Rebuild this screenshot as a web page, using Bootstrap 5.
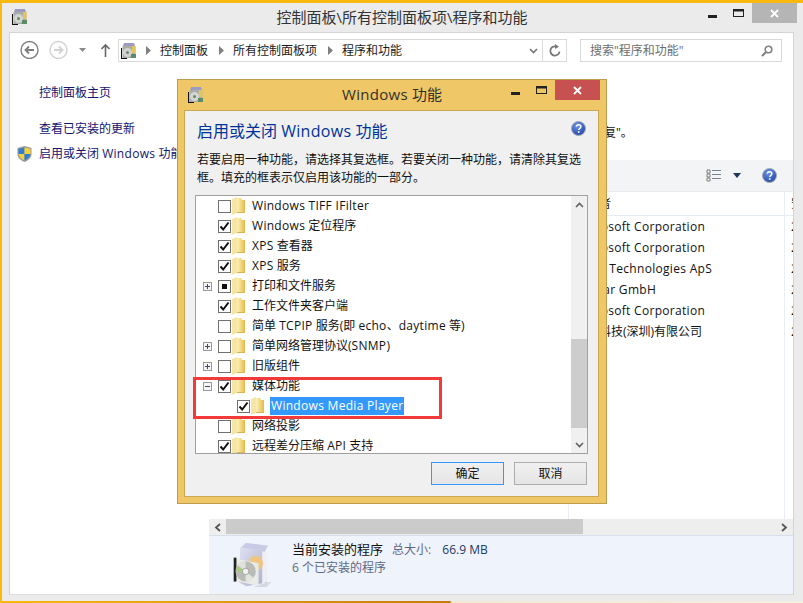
<!DOCTYPE html>
<html lang="zh-CN">
  <head>
    <meta charset="UTF-8" />
    <title>程序和功能</title>
    <link href="https://cdn.jsdelivr.net/npm/bootstrap@5.3.0/dist/css/bootstrap.min.css" rel="stylesheet" />
    <style>
      html, body { width: 803px; height: 603px; overflow: hidden; }
      body {
        background: #ebebeb;
        font-family: "Open Sans", "Noto Sans CJK SC", sans-serif;
        font-size: 12px;
        line-height: 16px;
        color: #1a1a1a;
      }
      .lat { letter-spacing: .3px; }
      .win-main {
        width: 803px; height: 603px; position: relative;
        border-top: 3px solid #fbb80f; border-left: 2px solid #fbb80f;
      }
      .win-title { height: 29px; padding-left: 10px; }
      .win-icon { margin-top: 6px; }
      .win-title-text { flex: 1; text-align: center; font-size: 15px; color: #333; padding-left: 120px; padding-top: 6px; }
      .win-btns { width: 141px; height: 20px; margin-right: 6px; }
      .cap-min { margin-right: 16px; }
      .cap-max { margin-right: 8px; }
      .win-close { width: 45px; height: 20px; background: #b5b5b5; color: #fff; }
      .win-frame {
        width: 785px; height: 563px; margin-left: 7px;
        background: #fff; border: 1px solid #d4d4d4; border-bottom-color: #dcdcdc;
      }
      .addr-row { height: 42px; padding: 6px 0 0 10px; }
      .nav-ico { margin-top: 1px; }
      .nav-gap { margin-right: 10px; }
      .nav-gap-up { margin-right: 13px; }
      .addr-bar { width: 449px; height: 23px; margin-left: 7px; border: 1px solid #d9d9d9; }
      .addr-ico { margin: 0 9px 0 2px; }
      .addr-chev { margin-right: 9px; }
      .addr-seg { margin-right: 11px; white-space: nowrap; }
      .addr-refresh { width: 24px; height: 21px; border-left: 1px solid #d9d9d9; }
      .search-box { width: 202px; height: 23px; margin-left: 13px; border: 1px solid #d9d9d9; color: #6d6d6d; padding: 0 8px 0 9px; }
      .content-row { height: 519px; }
      .side-col { width: 200px; padding-top: 10px; }
      .side-link { color: #14146e; padding-left: 29px; height: 16px; white-space: nowrap; position: relative; }
      .side-second { margin-top: 20px; }
      .side-third { margin-top: 9px; }
      .shield-ico { position: absolute; left: 7px; top: 0; }
      .main-col { width: 584px; }
      .main-top { height: 85px; padding: 50px 0 0 395px; white-space: nowrap; color: #111; }
      .tool-row { height: 32px; background: #f3f4f6; border-bottom: 1px solid #e9ebee; padding-right: 16px; }
      .tool-view { margin-right: 12px; }
      .tool-drop { margin-right: 21px; }
      .table-wrap {
        height: 327px; overflow: hidden;
        background:
          linear-gradient(#e9eef6, #e9eef6) 575px 0 / 1px 100% no-repeat,
          linear-gradient(#e9eef6, #e9eef6) 359px 0 / 1px 100% no-repeat;
      }
      .col-head { height: 24px; border-bottom: 1px solid #e6ecf6; padding-top: 4px; }
      .pub-row { height: 21px; line-height: 21px; white-space: nowrap; color: #111; }
      .pub-name { width: 582px; padding-left: 366px; flex: none; }
      .pub-date { width: 2px; overflow: hidden; }
      .hscroll { height: 16px; background: #eeeeee; }
      .hs-btn { width: 17px; height: 16px; }
      .hs-thumb { width: 357px; height: 15px; background: #cbcbcb; }
      .status-bar { height: 59px; background: #eff3fb; border-top: 1px solid #d5dfee; padding: 6px 0 0 22px; color: #5e6a85; }
      .status-title { color: #111; font-size: 13px; margin-right: 9px; }
      .status-text { margin: -1px 0 0 17px; }
      .status-size { color: #203a66; margin-left: 8px; }
      .status-sub { margin-top: 2px; }
      .bottom-strip {
        position: absolute; left: -2px; right: 0; bottom: 0; height: 2px;
        background: linear-gradient(90deg, #fbb80f 0, #c87a10 56%, #f3e9d2 56.3%, #f6f0e0 100%);
      }
      /* dialog */
      .dlg {
        position: absolute; left: 175px; top: 76px; width: 430px; height: 425px;
        background: #efc766; border: 1px solid #bd9d4e;
      }
      .dlg-title { height: 30px; padding-left: 10px; }
      .dlg-icon { margin-top: 7px; }
      .dlg-title-text { position: absolute; left: 0; right: 0; top: 6px; text-align: center; font-size: 15px; color: #33302a; }
      .dlg-btns { position: absolute; right: 6px; top: 0; height: 20px; }
      .dlg-close { width: 45px; height: 20px; background: #c75050; color: #fff; }
      .dlg-body {
        width: 415px; height: 387px; margin-left: 6px;
        background: #f0f0f0; border: 1px solid #c9a650; padding: 10px 11px 0 12px;
      }
      .dlg-head { height: 21px; color: #003399; font-size: 16px; line-height: 20px; }
      .dlg-help { margin-right: 1px; }
      .dlg-desc { margin-top: 9px; height: 36px; line-height: 18px; color: #111; }
      .tree-box { margin-top: 8px; width: 393px; height: 259px; background: #fff; border: 1px solid #a0a0a0; margin-left: -2px; overflow: hidden; }
      .tree-list { width: 375px; height: 257px; overflow: hidden; }
      .tree-row { height: 20px; padding-left: 7px; white-space: nowrap; color: #111; }
      .tree-row.is-child { padding-left: 41px; }
      .tree-exp { width: 9px; height: 9px; margin-right: 6px; flex: none; }
      .tree-chk { width: 13px; height: 13px; border: 1px solid #707070; background: #fff; flex: none; }
      .tree-folder { margin: 0 6px 0 1px; flex: none; }
      .tree-sel { background: #3399ff; color: #fff; padding: 1px; margin-left: -1px; }
      .vscroll { width: 16px; height: 257px; background: #f0f0f0; }
      .vs-btn { height: 17px; }
      .vs-track { height: 223px; padding-top: 126px; }
      .vs-thumb { height: 89px; background: #cdcdcd; }
      .dlg-foot { margin-top: 8px; gap: 10px; }
      .dlg-btn {
        width: 73px; height: 23px; padding: 0; font-size: 12px; line-height: 20px; color: #111; border-radius: 0;
        border: 1px solid #acacac; background: linear-gradient(#f0f0f0, #e5e5e5);
      }
      .dlg-btn.is-default { border-color: #3399ff; }
      .red-mark { position: absolute; left: 15px; top: 297px; width: 249px; height: 42px; border: 3px solid #f23a3a; pointer-events: none; }
    </style>
  </head>
  <body>
    <svg width="0" height="0" class="position-absolute">
      <defs>
        <linearGradient id="fg" x1="0" y1="0" x2="1" y2="0">
          <stop offset="0" stop-color="#fbf0bd" /><stop offset=".5" stop-color="#f3d77f" /><stop offset="1" stop-color="#e3ba4c" />
        </linearGradient>
        <linearGradient id="boxg" x1="0" y1="0" x2="1" y2="1">
          <stop offset="0" stop-color="#e2e4f4" /><stop offset="1" stop-color="#a8acc9" />
        </linearGradient>
        <radialGradient id="helpg" cx=".4" cy=".3" r=".8">
          <stop offset="0" stop-color="#6d95e6" /><stop offset="1" stop-color="#1c3f9f" />
        </radialGradient>
      </defs>
      <symbol id="app" viewBox="0 0 16 16">
        <path d="M3 0h10l1 3H2z" fill="#9b9cc0" />
        <rect x="1.500" y="3" width="13" height="12" fill="#a9ada6" />
        <rect x="11" y="3" width="3.500" height="7" fill="#e2c65c" />
        <circle cx="6.500" cy="9.500" r="4.500" fill="#d3d6d0" />
        <circle cx="6.500" cy="9.500" r="1.500" fill="#6f8571" />
        <path d="M0 5v11h6v-1H1V5z" fill="#111" />
        <rect x="10" y="11" width="5" height="4" fill="#5d8a68" />
      </symbol>
      <symbol id="folder" viewBox="0 0 14 18">
        <path d="M0 2 5 0v16l-5 2z" fill="#f5e6a6" />
        <path d="M5 1h4l1 2h3v13H5z" fill="url(#fg)" />
        <path d="M5 16h8v-1H5z" fill="#d9b552" />
      </symbol>
      <symbol id="plus" viewBox="0 0 9 9">
        <rect x=".5" y=".5" width="8" height="8" fill="#f4f4f4" stroke="#9a9a9a" />
        <path d="M2 4.500h5M4.500 2v5" stroke="#3b4a7a" />
      </symbol>
      <symbol id="minus" viewBox="0 0 9 9">
        <rect x=".5" y=".5" width="8" height="8" fill="#f4f4f4" stroke="#9a9a9a" />
        <path d="M2 4.500h5" stroke="#3b4a7a" />
      </symbol>
      <symbol id="tick" viewBox="0 0 11 11">
        <path d="M1.500 5.500 4.200 8.500 9.500 1.500" fill="none" stroke="#111" stroke-width="2" />
      </symbol>
      <symbol id="help" viewBox="0 0 15 15">
        <circle cx="7.500" cy="7.500" r="7" fill="url(#helpg)" stroke="#a9abb2" />
        <path d="M5.300 5.600c.2-2.600 4.600-2.600 4.600 0 0 1.800-2.200 1.600-2.200 3.500" fill="none" stroke="#fff" stroke-width="1.500" />
        <rect x="6.900" y="10.200" width="1.600" height="1.600" fill="#fff" />
      </symbol>
      <symbol id="xmark" viewBox="0 0 9 9">
        <path d="M1 1l7 7M8 1 1 8" stroke="currentColor" stroke-width="1.800" />
      </symbol>
      <symbol id="chev-r" viewBox="0 0 5 9"><path d="M0 0l5 4.500L0 9z" fill="#7f7f7f" /></symbol>
    </svg>

    <div class="win-main">
      <div class="win-title d-flex align-items-start">
        <svg width="16" height="16" class="win-icon flex-shrink-0"><use href="#app" /></svg>
        <div class="win-title-text">控制面板\所有控制面板项\程序和功能</div>
        <div class="win-btns d-flex justify-content-end">
          <svg width="9" height="20" class="cap-min"><rect y="12" width="9" height="3" fill="#222" /></svg>
          <svg width="11" height="20" class="cap-max"><rect x=".5" y="6.500" width="10" height="7" fill="none" stroke="#222" /><rect y="6" width="11" height="2.500" fill="#222" /></svg>
          <div class="win-close d-flex align-items-center justify-content-center"><svg width="9" height="9"><use href="#xmark" /></svg></div>
        </div>
      </div>

      <div class="win-frame">
        <div class="addr-row d-flex">
          <svg width="19" height="19" viewBox="0 0 19 19" class="nav-ico nav-gap flex-shrink-0"><circle cx="9.500" cy="10" r="8.500" fill="#fff" stroke="#7e7e7e" stroke-width="1.400" /><path d="M14 10H6M9 6.500 5.500 10 9 13.500" fill="none" stroke="#7e7e7e" stroke-width="1.800" /></svg>
          <svg width="19" height="19" viewBox="0 0 19 19" class="nav-ico nav-gap flex-shrink-0"><circle cx="9.500" cy="10" r="8.500" fill="#fff" stroke="#d2d2d2" stroke-width="1.400" /><path d="M5 10h8M10 6.500l3.500 3.500-3.500 3.500" fill="none" stroke="#d2d2d2" stroke-width="1.800" /></svg>
          <svg width="9" height="19" viewBox="0 0 9 19" class="nav-ico nav-gap-up flex-shrink-0"><path d="M1 8h7l-3.500 4z" fill="#8a8a8a" /></svg>
          <svg width="11" height="19" viewBox="0 0 11 19" class="nav-ico flex-shrink-0"><path d="M5.500 17V5M1.500 9l4-4 4 4" fill="none" stroke="#666" stroke-width="1.600" /></svg>
          <div class="addr-bar d-flex align-items-center">
            <svg width="16" height="16" class="addr-ico flex-shrink-0"><use href="#app" /></svg>
            <svg width="5" height="9" class="addr-chev flex-shrink-0"><use href="#chev-r" /></svg>
            <span class="addr-seg">控制面板</span>
            <svg width="5" height="9" class="addr-chev flex-shrink-0"><use href="#chev-r" /></svg>
            <span class="addr-seg">所有控制面板项</span>
            <svg width="5" height="9" class="addr-chev flex-shrink-0"><use href="#chev-r" /></svg>
            <span class="addr-seg">程序和功能</span>
            <svg width="9" height="6" viewBox="0 0 9 6" class="ms-auto me-1 flex-shrink-0"><path d="M1 1l3.500 3.500L8 1" fill="none" stroke="#777" stroke-width="1.600" /></svg>
            <div class="addr-refresh d-flex align-items-center justify-content-center">
              <svg width="12" height="13" viewBox="0 0 12 13"><path d="M10.500 7.500A4.600 4.600 0 1 1 7 2.500" fill="none" stroke="#777" stroke-width="1.800" /><path d="M6 0l4 2.700L6 5z" fill="#777" /></svg>
            </div>
          </div>
          <div class="search-box d-flex align-items-center justify-content-between">
            <span>搜索"程序和功能"</span>
            <svg width="12" height="12" viewBox="0 0 12 12"><circle cx="7.500" cy="4.500" r="3.300" fill="none" stroke="#808080" stroke-width="1.600" /><path d="M5 7l-4 4" stroke="#808080" stroke-width="2.200" /></svg>
          </div>
        </div>

        <div class="content-row d-flex">
          <div class="side-col">
            <div class="side-link">控制面板主页</div>
            <div class="side-link side-second">查看已安装的更新</div>
            <div class="side-link side-third">
              <svg width="15" height="16" viewBox="0 0 15 16" class="shield-ico"><path d="M7.500 0 14.500 2v6c0 4-3.500 6.500-7 8-3.500-1.500-7-4-7-8V2z" fill="#9a9a9a" /><path d="M7.500 1.500V8H1.500V3z" fill="#2e7fd0" /><path d="M7.500 1.500 13.500 3V8h-6z" fill="#f6d23a" /><path d="M1.500 8h6v6.500C4.500 13 2 11 1.500 8z" fill="#f6d23a" /><path d="M7.500 8h6c-.5 3-3 5-6 6.500z" fill="#2e7fd0" /></svg>
              启用或关闭 <span class="lat">Windows</span> 功能
            </div>
          </div>
          <div class="main-col d-flex flex-column">
            <div class="main-top">复"。</div>
            <div class="tool-row d-flex align-items-center justify-content-end">
              <svg width="15" height="13" viewBox="0 0 15 13" class="tool-view"><path d="M1 1h3v3H1zM1 5h3v3H1zM1 9h3v3H1z" fill="#fff" stroke="#7a7a7a" /><path d="M6 1.500h9M6 5.500h9M6 9.500h9" stroke="#7a8290" /></svg>
              <svg width="8" height="5" viewBox="0 0 8 5" class="tool-drop"><path d="M0 0h8L4 5z" fill="#1f3558" /></svg>
              <svg width="15" height="15"><use href="#help" /></svg>
            </div>
            <div class="table-wrap" id="pubTable"></div>
            <div class="hscroll d-flex">
              <div class="hs-btn d-flex align-items-center justify-content-center"><svg width="7" height="9" viewBox="0 0 7 9"><path d="M6 1 2 4.500 6 8" fill="none" stroke="#555" stroke-width="1.800" /></svg></div>
              <div class="hs-thumb"></div>
              <div class="hs-btn ms-auto d-flex align-items-center justify-content-center"><svg width="7" height="9" viewBox="0 0 7 9"><path d="M1 1l4 3.500L1 8" fill="none" stroke="#555" stroke-width="1.800" /></svg></div>
            </div>
            <div class="status-bar d-flex">
              <svg width="44" height="46" viewBox="0 0 44 50" class="flex-shrink-0">
                <path d="M30 46l12-3-5 6H22z" fill="#d6d9e4" />
                <path d="M8 6 14 1l24 3-3 6 2 34-22 4-8-4z" fill="url(#boxg)" />
                <path d="M14 1 38 4l-3 5-25-3z" fill="#c9cbe6" />
                <path d="M32 10l5 1v32l-5 3z" fill="#eeeef4" />
                <circle cx="25" cy="23" r="8" fill="#eec680" />
                <path d="M3 18 28 23v25L3 42z" fill="#e8ebe7" />
                <path d="M1 17h3v26H1z" fill="#222" />
                <circle cx="14" cy="32" r="11" fill="#b9bbb7" />
                <path d="M14 32 5 25a11 11 0 0 1 9-4z" fill="#dfe1dc" />
                <path d="M14 32 23 39a11 11 0 0 1-9 4z" fill="#e3e5e1" />
                <path d="M5 26l7 5-8 2z" fill="#a9cc77" />
                <circle cx="14" cy="32" r="3.500" fill="#f2f3f1" stroke="#8e908c" stroke-width=".8" />
              </svg>
              <div class="status-text">
                <div><span class="status-title">当前安装的程序</span>总大小: <span class="status-size">66.9 MB</span></div>
                <div class="status-sub">6 个已安装的程序</div>
              </div>
            </div>
          </div>
        </div>
      </div>
      <div class="bottom-strip"></div>

      <div class="dlg">
        <div class="dlg-title d-flex align-items-start">
          <svg width="16" height="16" class="dlg-icon"><use href="#app" /></svg>
          <div class="dlg-title-text"><span class="lat">Windows</span> 功能</div>
          <div class="dlg-btns d-flex">
            <svg width="9" height="20" class="cap-min"><rect y="12" width="9" height="3" fill="#222" /></svg>
            <svg width="11" height="20" class="cap-max"><rect x=".5" y="6.500" width="10" height="7" fill="none" stroke="#222" /><rect y="6" width="11" height="2.500" fill="#222" /></svg>
            <div class="dlg-close d-flex align-items-center justify-content-center"><svg width="9" height="9"><use href="#xmark" /></svg></div>
          </div>
        </div>
        <div class="dlg-body">
          <div class="dlg-head d-flex justify-content-between">
            <span>启用或关闭 <span class="lat">Windows</span> 功能</span>
            <svg width="15" height="15" class="dlg-help"><use href="#help" /></svg>
          </div>
          <div class="dlg-desc">若要启用一种功能，请选择其复选框。若要关闭一种功能，请清除其复选<br />框。填充的框表示仅启用该功能的一部分。</div>
          <div class="tree-box d-flex">
            <div class="tree-list" id="treeList"></div>
            <div class="vscroll">
              <div class="vs-btn d-flex align-items-center justify-content-center"><svg width="9" height="6" viewBox="0 0 9 6"><path d="M1 5l3.500-3.500L8 5" fill="none" stroke="#606060" stroke-width="1.600" /></svg></div>
              <div class="vs-track"><div class="vs-thumb"></div></div>
              <div class="vs-btn d-flex align-items-center justify-content-center"><svg width="9" height="6" viewBox="0 0 9 6"><path d="M1 1l3.500 3.500L8 1" fill="none" stroke="#606060" stroke-width="1.600" /></svg></div>
            </div>
          </div>
          <div class="dlg-foot d-flex justify-content-end">
            <button class="btn dlg-btn is-default">确定</button>
            <button class="btn dlg-btn">取消</button>
          </div>
        </div>
        <div class="red-mark"></div>
      </div>
    </div>

    <script>
      const wrapLatin = (s) => s.replace(/[A-Za-z][A-Za-z ]*[A-Za-z]/g, (m) => `<span class="lat">${m}</span>`);

      // publisher column, the dialog covers most of it
      const publishers = [
        "Microsoft Corporation",
        "Microsoft Corporation",
        "Unity Technologies ApS",
        "Kaspar GmbH",
        "Microsoft Corporation",
        "腾讯科技(深圳)有限公司",
      ];
      document.getElementById("pubTable").innerHTML =
        `<div class="col-head d-flex"><div class="pub-name">发布者</div><div class="pub-date">安</div></div>` +
        publishers
          .map((p) => `<div class="pub-row d-flex"><div class="pub-name">${wrapLatin(p)}</div><div class="pub-date">2</div></div>`)
          .join("");

      // exp: plus/minus/none, state: on/off/part
      const rows = [
        ["", "off", "Windows TIFF IFilter"],
        ["", "on", "Windows 定位程序"],
        ["", "on", "XPS 查看器"],
        ["", "on", "XPS 服务"],
        ["plus", "part", "打印和文件服务"],
        ["", "on", "工作文件夹客户端"],
        ["", "off", "简单 TCPIP 服务(即 echo、daytime 等)"],
        ["plus", "off", "简单网络管理协议(SNMP)"],
        ["plus", "off", "旧版组件"],
        ["minus", "on", "媒体功能"],
        ["child", "on", "Windows Media Player"],
        ["", "off", "网络投影"],
        ["", "on", "远程差分压缩 API 支持"],
      ];
      document.getElementById("treeList").innerHTML = rows
        .map(([exp, state, label]) => {
          const child = exp === "child";
          const icon = exp && !child ? `<svg width="9" height="9" class="d-block"><use href="#${exp}" /></svg>` : "";
          const mark =
            state === "on"
              ? `<svg width="11" height="11" class="d-block"><use href="#tick" /></svg>`
              : state === "part"
              ? `<svg width="11" height="11" class="d-block"><rect x="3" y="3" width="5" height="5" fill="#111" /></svg>`
              : "";
          return `
            <div class="tree-row d-flex align-items-center ${child ? "is-child" : ""}">
              ${child ? "" : `<div class="tree-exp">${icon}</div>`}
              <div class="tree-chk">${mark}</div>
              <svg width="14" height="18" class="tree-folder"><use href="#folder" /></svg>
              <span class="${child ? "tree-sel" : ""}">${wrapLatin(label)}</span>
            </div>`;
        })
        .join("");
    </script>
    <script src="https://cdn.jsdelivr.net/npm/bootstrap@5.3.0/dist/js/bootstrap.bundle.min.js"></script>
  </body>
</html>
